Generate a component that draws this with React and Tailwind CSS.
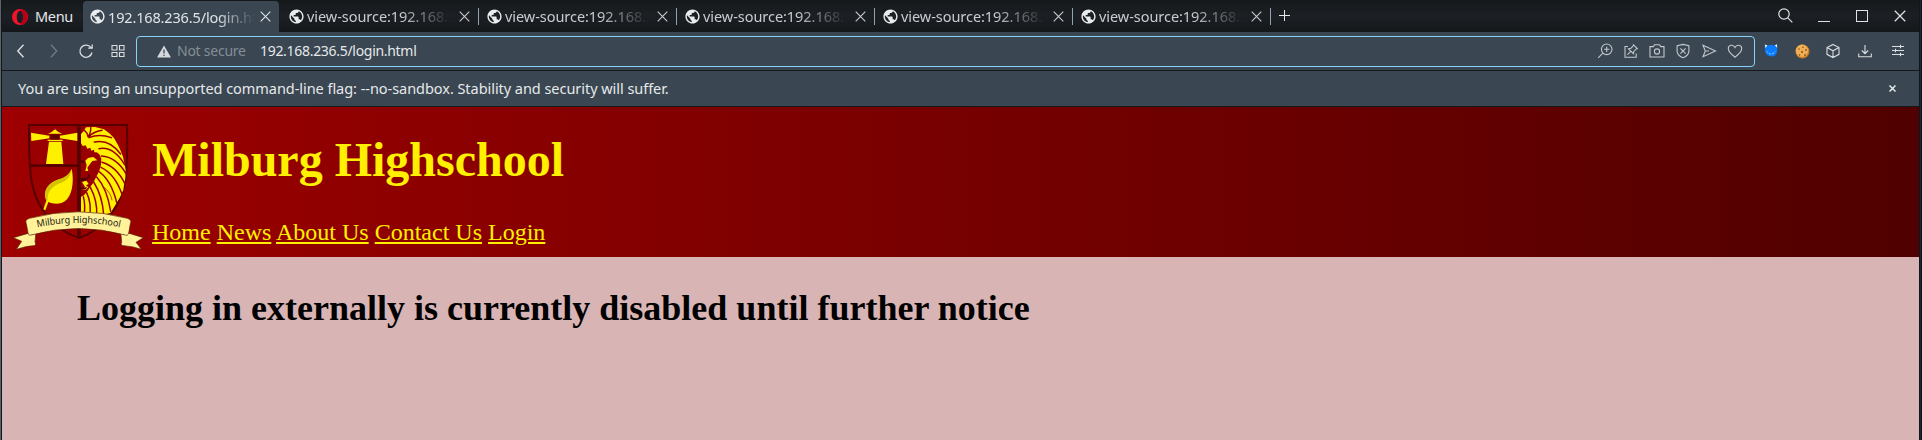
import React from "react";
import { MdPublic } from "react-icons/md";

const Globe = () => <MdPublic className="-mx-px h-[17px] w-[17px] shrink-0 text-[#e9eced]" />;

const Cross = ({ className }) => (
  <svg viewBox="0 0 11 11" className={className} fill="none" stroke="currentColor" strokeWidth="1.1">
    <path d="M.7 .7 10.3 10.3M10.3 .7 .7 10.3" />
  </svg>
);

const Tab = ({ title, active }) => (
  <div
    className={
      active
        ? "mr-[2px] mt-px flex h-[31px] w-[196px] shrink-0 items-center rounded-t-sm bg-[#3a4651] pl-[7px] text-[#dfe3e6]"
        : "flex h-8 w-[198px] shrink-0 items-center pl-[8px] text-[#c9cccf]"
    }
  >
    <Globe />
    <div
      className={
        active
          ? "ml-[3px] w-[147px] overflow-hidden whitespace-nowrap text-[14.5px] leading-5 tracking-[-0.15px] [mask-image:linear-gradient(to_right,#000_74%,transparent_100%)]"
          : "ml-[3px] w-[147px] overflow-hidden whitespace-nowrap text-[14.5px] leading-5 tracking-[-0.05px] [mask-image:linear-gradient(to_right,#000_64%,transparent_98%)]"
      }
    >
      {title}
    </div>
    <Cross className="ml-[5px] h-[11px] w-[11px] shrink-0" />
    {!active && <div className="ml-[8px] h-[17px] w-px shrink-0 bg-[#8fa3b3]" />}
  </div>
);

const Icon = ({ children, className }) => (
  <svg
    viewBox="0 0 16 16"
    className={"h-4 w-4 shrink-0 " + (className || "")}
    fill="none"
    stroke="currentColor"
    strokeWidth="1.1"
  >
    {children}
  </svg>
);

const Crest = () => (
  <svg viewBox="30 60 411 390" className="mt-[13px] h-[130px] w-[137px] shrink-0">
    <path d="M87 75H381C382 130 384 205 374 250C360 320 310 390 237 414C165 390 110 325 96 250C86 200 87 130 87 75Z" fill="#9b0000" stroke="#560000" strokeWidth="6" />
    <path d="M237 75V414" stroke="#560000" strokeWidth="11" />
    <path d="M89 197H237" stroke="#560000" strokeWidth="8" />
    <g fill="#fff000">
      <path d="M93 98 148 107V115L94 123ZM232 98 180 107V115L232 123Z" />
      <path d="M144 101Q157 97 165 88Q173 97 187 101ZM143 119H188V123H143ZM147 125H184L190 192H138Z" />
      <path d="M152 103H178V119H152Z" fill="#650000" />
      <path d="M139 303C127 270 146 248 177 238C200 231 208 222 215 207C222 240 218 277 202 297C185 315 162 313 145 306L136 331 130 328Z" />
      <path d="M139 303C127 270 146 248 177 238C200 231 208 222 215 207C212 232 200 242 180 250C155 260 142 275 143 299L131 318Z" fill="#d3c300" />
    </g>
    <path
      d="M243 102 252 92 258 82 285 81 312 88 328 100 342 114 354 135 361 150 369 170 373 190 377 210 376 235 372 255 370 270 360 292 348 312 332 338 300 347H243V290L252 286 262 274 270 262 280 248 290 228 298 212 303 194 304 176 298 163 290 157 283 157 282 149 274 152 271 143 262 146 257 136 248 138 243 130Z"
      fill="#fff000"
    />
    <g fill="none" stroke="#9b0000" strokeWidth="4.500" strokeLinecap="round">
      <path d="M264 110Q262 98 254 92M265 110Q274 94 272 82M266 111Q278 96 306 91M267 113Q298 100 334 113" />
      <path d="M283 126Q328 116 362 162" />
      <path d="M297 146Q340 138 374 194" />
      <path d="M304 168Q348 170 379 222" />
      <path d="M306 187Q350 200 375 252" />
      <path d="M303 202Q345 222 366 283" />
      <path d="M297 215Q333 240 350 307" />
      <path d="M290 231Q321 265 332 334" />
      <path d="M281 246Q307 287 311 344" />
      <path d="M271 262Q293 303 290 347" />
      <path d="M260 278Q275 310 269 347" />
      <path d="M250 290Q257 315 252 347" />
      <path d="M312 262Q333 278 336 300" strokeWidth="2" />
    </g>
    <g fill="#fff000">
      <path d="M256 182 264 174 280 171 292 181 277 183 270 192 262 203 265 213 256 213 260 196Z" />
      <path d="M246 246 259 242 266 252 258 256 265 262 256 270 244 268 256 262Z" />
    </g>
    <path d="M243 235 261 233 267 220 270 232 259 241 243 244ZM244 180 254 184 252 190 243 187ZM244 262 252 264 262 260 257 268 244 269Z" fill="#4d0000" />
    <path d="M40 413 81 401 108 395 105 426Q110 437 100 437Q78 438 49 448L65 424ZM430 413 391 401 362 395 365 426Q360 437 372 437Q400 439 424 448L408 427Z" fill="#fff29a" stroke="#5d2300" strokeWidth="2" />
    <path d="M84 400Q90 408 107 401L105 392ZM387 400Q380 408 363 401L365 392Z" fill="#4a1800" />
    <path d="M79 371Q73 360 88 355Q235 316 382 355Q397 360 391 371L386 400Q382 410 376 405Q235 366 93 405Q85 408 84 398Z" fill="#fff29a" stroke="#5d2300" strokeWidth="2" />
    <path id="ribbon" d="M112 382Q236 356 360 382" fill="none" />
    <text fontSize="29" className="fill-[#222010] font-['Noto_Sans']">
      <textPath href="#ribbon" textLength="250" lengthAdjust="spacingAndGlyphs">Milburg Highschool</textPath>
    </text>
  </svg>
);

const links = ["Home", "News", "About Us", "Contact Us", "Login"];

export default function App() {
  return (
    <div className="flex h-[440px] w-[1922px] overflow-hidden bg-[#101820] font-['Noto_Sans',sans-serif]">
      <div className="w-px shrink-0 bg-[#5b6268]" />
      <div className="w-px shrink-0 bg-[#15181b]" />
      <div className="flex w-[1917px] shrink-0 flex-col">
        <div className="flex h-8 shrink-0 items-center bg-linear-to-b from-[#14181b] via-[#1c2024] to-[#14181b]">
          <div className="flex w-[81px] shrink-0 items-center pl-[10px] text-[14.5px] leading-5 text-[#e4e6e8]">
            <svg viewBox="0 0 16 16" className="mt-[2px] h-4 w-4">
              <path fillRule="evenodd" fill="#f0142c" d="M8 0a8 8 0 1 0 0 16A8 8 0 1 0 8 0ZM8 2C10 2 11.2 4.7 11.2 8S10 14 8 14 4.8 11.3 4.8 8 6 2 8 2Z" />
              <path fill="#b70018" d="M9 .1A8 8 0 0 1 9 15.9L8 14C10 14 11.2 11.3 11.2 8S10 2 8 2Z" />
            </svg>
            <span className="ml-[7px] tracking-[-0.35px]">Menu</span>
          </div>
          <Tab active title="192.168.236.5/login.html" />
          {[0, 1, 2, 3, 4].map((i) => (
            <Tab key={i} title="view-source:192.168.236.5" />
          ))}
          <svg viewBox="0 0 11 11" className="mb-px ml-[8px] h-[11px] w-[11px] text-[#e6e8ea]" stroke="currentColor">
            <path d="M5.5 0V11M0 5.5H11" />
          </svg>
          <div className="ml-auto flex items-center pr-[13px] text-[#dfe2e4]">
            <svg viewBox="0 0 15 15" className="mb-[2px] h-[15px] w-[15px]" fill="none" stroke="currentColor" strokeWidth="1.2">
              <circle cx="6" cy="6" r="5.2" />
              <path d="M9.8 9.8 14.3 14.3" />
            </svg>
            <div className="ml-[25px] mt-[11px] h-px w-3 bg-current" />
            <div className="ml-[26px] h-3 w-3 border border-current" />
            <Cross className="ml-[26px] h-3 w-3" />
          </div>
        </div>

        <div className="flex h-[38px] shrink-0 items-center bg-[#3a4651] text-[#d9dde0]">
          <Icon className="ml-[11px]"><path d="M10.500 1.800 4.800 8 10.500 14.200" strokeWidth="1.4" /></Icon>
          <Icon className="ml-[17px] text-[#6f7a83]"><path d="M5 1.800 10.700 8 5 14.200" strokeWidth="1.4" /></Icon>
          <Icon className="ml-[16px]"><path d="M13 4.600A6.100 6.100 0 1 0 14 9.500M14.200 1.500V5.200H10.200" strokeWidth="1.3" /></Icon>
          <Icon className="ml-[16px]"><path d="M2 2.500h5v4.500h-5ZM9.500 2.500h4.500v4.500h-4.500ZM2 9.500h5v4h-5ZM9.500 9.500h4.500v4h-4.500Z" /></Icon>
          <div className="ml-[10px] flex h-[31px] w-[1619px] shrink-0 items-center rounded-[4px] border border-[#86d4fb] pl-[20px]">
            <svg viewBox="0 0 14 12" className="h-[13px] w-[14px]">
              <path d="M7 0 14 12H0Z" fill="#d5d9dc" />
              <path d="M7 4V8M7 9.200V10.600" stroke="#3a4651" strokeWidth="1.3" />
            </svg>
            <span className="ml-[6px] w-[69px] text-[14px] leading-5 tracking-[-0.25px] whitespace-nowrap text-[#848e96]">Not secure</span>
            <span className="ml-[14px] text-[14px] leading-5 tracking-[-0.3px] text-[#e6e9eb]">192.168.236.5/login.html</span>
            <div className="ml-auto flex items-center gap-[10px] pr-[11px] text-[#c3c9cd]">
              <Icon><circle cx="9.700" cy="6.300" r="5.300" /><path d="M5.800 10.200 1.200 14.800M9.700 3.700V8.900M7.100 6.300H12.300" /></Icon>
              <Icon><path d="M5 3.500H2V14.300H13.200V10.500M4.500 11.700 8 8.200M5.500 5.800 10.400 10.700 11 8.200 14 5.300 10.800 2.200 8 5.200ZM10 1.400 14.800 6.200" /></Icon>
              <Icon><path d="M1 3.600H4.300L5.500 1.800H10.500L11.700 3.600H15V14H1Z" /><circle cx="8" cy="8.500" r="2.600" /></Icon>
              <Icon><path d="M8 1.400 13.900 2.800V8C13.900 11.300 11.500 13.400 8 14.700 4.500 13.400 2.100 11.300 2.100 8V2.800ZM5.400 5.400 10.600 10.600M10.600 5.400 5.400 10.600" /></Icon>
              <Icon><path d="M2 2.300 14.500 8 2 13.700 4.300 8ZM4.300 8H8" /></Icon>
              <Icon><path d="M8 14.200C4 11.200 1.300 8.900 1.300 5.600 1.300 1.500 6.400 1.100 8 4.400 9.600 1.100 14.700 1.500 14.700 5.600 14.700 8.900 12 11.200 8 14.200Z" /></Icon>
            </div>
          </div>
          <svg viewBox="0 0 14 14" className="mb-[3px] ml-[9px] h-[14px] w-[14px] shrink-0">
            <path d="M.8 1.600 4 2.600Q7 .8 10 2.600L13 1.200 13.300 7A6.200 6 0 0 1 .9 8Z" fill="#087bff" />
            <path d="M.8 1.600 3.400 2.500 1.500 5ZM10.800 2.300 13 1.200 13.100 4.800Z" fill="#e9f4ff" />
            <path d="M3 8.500A4.500 4.500 0 0 0 11 8.500" stroke="#96cfff" strokeWidth="1" strokeDasharray="2 1" fill="none" />
          </svg>
          <svg viewBox="0 0 15 15" className="ml-[17px] h-[15px] w-[15px] shrink-0">
            <circle cx="7.500" cy="7.500" r="7" fill="#c97c26" />
            <circle cx="7" cy="6.800" r="6.200" fill="#efb055" />
            <g fill="#8a4a20"><circle cx="4" cy="5" r=".8" /><circle cx="8" cy="3.200" r=".8" /><circle cx="11" cy="6" r=".9" /><circle cx="7" cy="8" r="1" /><circle cx="4.500" cy="11" r=".8" /><circle cx="10" cy="11" r=".9" /></g>
          </svg>
          <Icon className="ml-[15px]"><path d="M8 1.400 14 4.500V11.300L8 14.600 2 11.300V4.500ZM2 4.500 8 7.800 14 4.500M8 7.800V14.600" /></Icon>
          <Icon className="ml-[16px]"><path d="M8 2V10.500M4.800 7.500 8 10.700 11.200 7.500M1.700 10.500V13.700H14.300V10.500" /></Icon>
          <Icon className="ml-[17px]"><path d="M2 3.500H14M2 7.500H14M2 11.500H14M10.500 1.800V5.200M5.500 5.800V9.200M10.500 9.800V13.200" /></Icon>
        </div>

        <div className="flex h-[37px] shrink-0 items-center border-y border-[#15191c] bg-[#3a4651] pl-4 text-[#e6e9eb]">
          <span className="mb-[2px] text-[14.5px] leading-5 tracking-[-0.045px]">You are using an unsupported command-line flag: --no-sandbox. Stability and security will suffer.</span>
          <svg viewBox="0 0 7 7" className="mb-px ml-auto mr-[23px] h-[7px] w-[7px]" stroke="currentColor" strokeWidth="1.500">
            <path d="M.5 .5 6.500 6.500M6.500 .5 .5 6.500" />
          </svg>
        </div>

        <header className="flex h-[150px] shrink-0 bg-linear-to-r/srgb from-[#9e0000] to-[#500000] pl-2 font-['Liberation_Serif',serif] text-[#fff000]">
          <Crest />
          <div className="ml-[5px] pt-[25px]">
            <h1 className="text-[48px] leading-[55px] font-bold">Milburg Highschool</h1>
            <nav className="mt-[32px] text-[24px] leading-[27px]">
              {links.map((l) => (
                <React.Fragment key={l}>
                  <a href="#" className="underline">{l}</a>{" "}
                </React.Fragment>
              ))}
            </nav>
          </div>
        </header>
        <main className="flex-1 bg-[#d8b4b4] pt-[31px] pl-[75px] font-['Liberation_Serif',serif] text-black">
          <h2 className="text-[36px] leading-[41px] font-bold">Logging in externally is currently disabled until further notice</h2>
        </main>
      </div>
      <div className="w-px shrink-0 bg-[#10171b]" />
      <div className="w-px shrink-0 bg-[#1c262d]" />
      <div className="w-px shrink-0 bg-[#0b1220]" />
    </div>
  );
}
